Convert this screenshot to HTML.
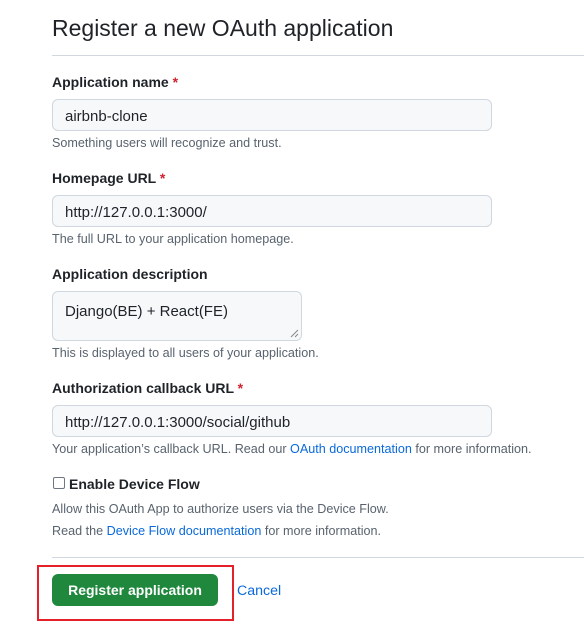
<!DOCTYPE html>
<html><head><meta charset="utf-8"><style>
*{box-sizing:border-box;margin:0;padding:0}
body{width:584px;height:641px;background:#fff;font-family:"Liberation Sans",Arial,sans-serif;color:#1f2328;position:relative;overflow:hidden}
.a{position:absolute}
h1{position:absolute;left:52px;top:12px;font-size:23px;font-weight:400;line-height:32px;white-space:nowrap}
.hr{position:absolute;left:52px;right:0;height:1px;background:#d0d7de}
.lab{position:absolute;left:52px;font-size:14px;font-weight:700;line-height:20px}
.lab span{color:#cf222e}
.inp{position:absolute;left:52px;background:#f6f8fa;border:1px solid #d0d7de;border-radius:6px;font-size:15px;padding:0 12px;line-height:33px}
.note{position:absolute;left:52px;font-size:12.6px;color:#59636e;line-height:18px;white-space:nowrap}
a{color:#0969da;text-decoration:none}
</style></head><body>
<h1>Register a new OAuth application</h1>
<div class="hr" style="top:55px"></div>
<div class="lab" style="top:72px">Application name <span>*</span></div>
<div class="inp" style="top:99px;width:440px;height:32px">airbnb-clone</div>
<div class="note" style="top:134px">Something users will recognize and trust.</div>
<div class="lab" style="top:168px">Homepage URL <span>*</span></div>
<div class="inp" style="top:195px;width:440px;height:32px">http://127.0.0.1:3000/</div>
<div class="note" style="top:230px">The full URL to your application homepage.</div>
<div class="lab" style="top:264px">Application description</div>
<div class="inp" style="top:291px;width:250px;height:50px;padding-top:5px;line-height:30px">Django(BE) + React(FE)</div>
<svg class="a" style="left:290px;top:329px" width="9" height="9"><path d="M1 8L8 1M5 8L8 5" stroke="#888" stroke-width="1"/></svg>
<div class="note" style="top:344px">This is displayed to all users of your application.</div>
<div class="lab" style="top:378px">Authorization callback URL <span>*</span></div>
<div class="inp" style="top:405px;width:440px;height:32px">http://127.0.0.1:3000/social/github</div>
<div class="note" style="top:440px">Your application’s callback URL. Read our <a>OAuth documentation</a> for more information.</div>
<div class="a" style="left:53px;top:477px;width:12px;height:12px;border:1px solid #6e7781;border-radius:2px"></div>
<div class="lab" style="left:69px;top:474px">Enable Device Flow</div>
<div class="note" style="top:500px">Allow this OAuth App to authorize users via the Device Flow.</div>
<div class="note" style="top:522px">Read the <a>Device Flow documentation</a> for more information.</div>
<div class="hr" style="top:557px"></div>
<div class="a" style="left:37px;top:565px;width:197px;height:56px;border:2px solid #e4202a"></div>
<div class="a" style="left:52px;top:574px;width:166px;height:32px;background:#1f883d;border-radius:6px;color:#fff;font-size:14px;font-weight:700;text-align:center;line-height:32px">Register application</div>
<div class="a" style="left:237px;top:581px;font-size:14.2px;line-height:20px;color:#0969da">Cancel</div>
</body></html>
